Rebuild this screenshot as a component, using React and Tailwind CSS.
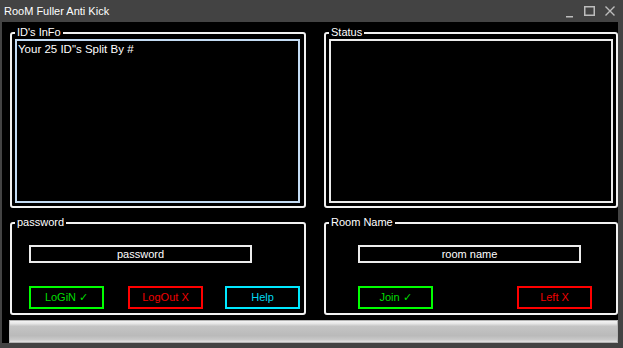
import React from "react";

const font = { fontFamily: '"Liberation Sans", Arial, sans-serif' };

function GroupBox({ label, className = "", children }) {
  return (
    <div className={`relative border-2 border-[#f2f2f2] rounded-[3px] ${className}`}>
      <span className="absolute left-[3px] top-[-9px] bg-black px-[2px] text-[11px] leading-[14px] text-white">
        {label}
      </span>
      {children}
    </div>
  );
}

function Btn({ children, color }) {
  const styles = {
    green: "border-[#00ff00] text-[#00dc00]",
    red: "border-[#ff0000] text-[#f00000]",
    cyan: "border-[#00e8ff] text-[#00d8f0]",
  };
  return (
    <button className={`w-[75px] h-[23px] border-2 ${styles[color]} bg-black text-[11px] leading-none flex items-center justify-center`}>
      {children}
    </button>
  );
}

export default function App() {
  return (
    <div className="w-[623px] h-[348px] bg-[#434343] flex flex-col select-none" style={font}>
      {/* title bar */}
      <div className="h-[22px] flex items-center pl-[4px] pr-[8px] text-white text-[11px]">
        <span className="flex-1">RooM Fuller Anti Kick</span>
        <div className="flex items-center gap-[10px]">
          <svg width="8" height="14" viewBox="0 0 8 14">
            <rect x="0" y="12" width="7" height="1.5" fill="#bdbdbd" />
          </svg>
          <svg width="11" height="14" viewBox="0 0 11 14">
            <rect x="0.75" y="2.75" width="9.5" height="8.5" fill="none" stroke="#bdbdbd" strokeWidth="1.5" />
          </svg>
          <svg width="10" height="14" viewBox="0 0 10 14">
            <path d="M0.5 2.5 L9.5 11.5 M9.5 2.5 L0.5 11.5" stroke="#bdbdbd" strokeWidth="1.4" />
          </svg>
        </div>
      </div>

      {/* client area */}
      <div className="ml-[2px] mr-[5px] mb-[5px] flex-1 bg-black flex flex-col pl-[8px] pt-[10px]">
        <div className="grid grid-cols-[296px_294px] grid-rows-[176px_93px] gap-x-[18px] gap-y-[14px]">
          <GroupBox label="ID's InFo" className="pl-[3px] pr-[4px] pt-[5px] pb-[3px]">
            <div className="h-full border-2 border-[#c4dcf4] pl-[1px] pt-[1px] text-white text-[11.5px] leading-[14px]">
              Your 25 ID"s Split By #
            </div>
          </GroupBox>
          <GroupBox label="Status" className="px-[3px] pt-[5px] pb-[3px]">
            <div className="h-full border-2 border-[#ececec]" />
          </GroupBox>

          <GroupBox label="password" className="pl-[17px] pt-[21px]">
            <div className="w-[223px] h-[18px] border-2 border-[#ececec] text-white text-[11px] flex items-center justify-center">
              password
            </div>
            <div className="flex mt-[23px]">
              <Btn color="green">LoGiN ✓</Btn>
              <div className="ml-[24px]">
                <Btn color="red">LogOut X</Btn>
              </div>
              <div className="ml-[22px]">
                <Btn color="cyan">Help</Btn>
              </div>
            </div>
          </GroupBox>
          <GroupBox label="Room Name" className="pl-[32px] pt-[21px]">
            <div className="w-[223px] h-[18px] border-2 border-[#ececec] text-white text-[11px] flex items-center justify-center">
              room name
            </div>
            <div className="flex mt-[23px]">
              <Btn color="green">Join ✓</Btn>
              <div className="ml-[84px]">
                <Btn color="red">Left X</Btn>
              </div>
            </div>
          </GroupBox>
        </div>

        {/* progress bar */}
        <div className="mt-[5px] ml-[-1px] flex-1 border border-[#b4b4b4] bg-[linear-gradient(to_bottom,#f4f4f4_0%,#e6e6e6_12%,#c4c4c4_25%,#bababa_70%,#c8c8c8_88%,#e2e2e2_100%)]" />
      </div>
    </div>
  );
}
